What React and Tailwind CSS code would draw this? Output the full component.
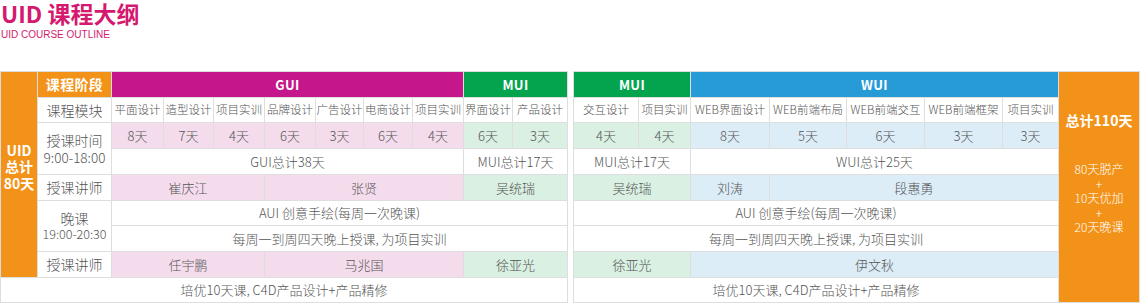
const FONT = { fontFamily: '"Noto Sans CJK SC", "Noto Sans", sans-serif' };

const GUI_MODULES = ['平面设计', '造型设计', '项目实训', '品牌设计', '广告设计', '电商设计', '项目实训'];
const GUI_DAYS = ['8天', '7天', '4天', '6天', '3天', '6天', '4天'];
const MUI_A_MODULES = ['界面设计', '产品设计'];
const MUI_A_DAYS = ['6天', '3天'];
const MUI_B_MODULES = ['交互设计', '项目实训'];
const MUI_B_DAYS = ['4天', '4天'];
const WUI_MODULES = ['WEB界面设计', 'WEB前端布局', 'WEB前端交互', 'WEB前端框架', '项目实训'];
const WUI_DAYS = ['8天', '5天', '6天', '3天', '3天'];

function Cell({ className = '', children }) {
  return (
    <div className={`flex items-center justify-center text-center font-light text-[#555] ${className}`}>
      {children}
    </div>
  );
}

function Head({ className = '', children }) {
  return (
    <div className={`flex items-center justify-center text-[13px] font-bold tracking-wide text-white ${className}`}>
      {children}
    </div>
  );
}

function LeftPanel() {
  return (
    <div className="grid grid-cols-[36px_73px_51px_49px_50px_50px_47px_48px_50px_48px_54px] grid-rows-[25px_24px_25px_25px_25px_24px_25px_25px_24px] gap-px border border-[#dedede] bg-[#dedede]">
      <div className="row-span-8 flex flex-col items-center justify-center bg-[#f39218] pb-[16px] text-[14px] font-bold leading-[16.5px] text-white">
        <span>UID</span>
        <span>总计</span>
        <span>80天</span>
      </div>
      <Head className="bg-[#f39218] text-[14px]">课程阶段</Head>
      <Head className="col-span-7 bg-[#c6168b]">GUI</Head>
      <Head className="col-span-2 bg-[#04a44f]">MUI</Head>

      <Cell className="bg-white text-[14px]">课程模块</Cell>
      {GUI_MODULES.concat(MUI_A_MODULES).map((m, i) => (
        <Cell key={i} className="bg-white text-[11.5px] whitespace-nowrap">{m}</Cell>
      ))}

      <Cell className="row-span-2 flex-col bg-white text-[14px] leading-[17px]">
        <span>授课时间</span>
        <span className="text-[13.5px]">9:00-18:00</span>
      </Cell>
      {GUI_DAYS.map((d, i) => (
        <Cell key={i} className="bg-[#f4dced] text-[13px]">{d}</Cell>
      ))}
      {MUI_A_DAYS.map((d, i) => (
        <Cell key={i} className="bg-[#d9f0e2] text-[13px]">{d}</Cell>
      ))}

      <Cell className="col-span-7 bg-white text-[13px]">GUI总计38天</Cell>
      <Cell className="col-span-2 bg-white text-[13px]">MUI总计17天</Cell>

      <Cell className="bg-white text-[14px]">授课讲师</Cell>
      <Cell className="col-span-3 bg-[#f4dced] text-[13px]">崔庆江</Cell>
      <Cell className="col-span-4 bg-[#f4dced] text-[13px]">张贤</Cell>
      <Cell className="col-span-2 bg-[#d9f0e2] text-[13px]">吴统瑞</Cell>

      <Cell className="row-span-2 flex-col bg-white text-[14px] leading-[15px]">
        <span>晚课</span>
        <span className="text-[12.5px]">19:00-20:30</span>
      </Cell>
      <Cell className="col-span-9 bg-white text-[13px]">AUI 创意手绘(每周一次晚课)</Cell>
      <Cell className="col-span-9 bg-white text-[13px]">每周一到周四天晚上授课, 为项目实训</Cell>

      <Cell className="bg-white text-[14px]">授课讲师</Cell>
      <Cell className="col-span-3 bg-[#f4dced] text-[13px]">任宇鹏</Cell>
      <Cell className="col-span-4 bg-[#f4dced] text-[13px]">马兆国</Cell>
      <Cell className="col-span-2 bg-[#d9f0e2] text-[13px]">徐亚光</Cell>

      <Cell className="col-span-11 bg-white text-[13px]">培优10天课, C4D产品设计+产品精修</Cell>
    </div>
  );
}

function RightPanel() {
  return (
    <div className="grid grid-cols-[64px_51px_78px_76px_77px_77px_55px_80px] grid-rows-[25px_24px_25px_25px_25px_24px_25px_25px_24px] gap-px border border-[#dedede] bg-[#dedede]">
      <Head className="col-span-2 bg-[#04a44f]">MUI</Head>
      <Head className="col-span-5 bg-[#279bd6]">WUI</Head>
      <div className="row-span-9 flex flex-col items-center bg-[#f39218] pt-[38px] text-white">
        <span className="text-[14px] font-bold leading-[20px]">总计110天</span>
        <div className="mt-[32px] flex flex-col items-center text-[12px] font-light leading-[14.5px]">
          <span>80天脱产</span>
          <span>+</span>
          <span>10天优加</span>
          <span>+</span>
          <span>20天晚课</span>
        </div>
      </div>

      {MUI_B_MODULES.concat(WUI_MODULES).map((m, i) => (
        <Cell key={i} className="bg-white text-[11.5px] whitespace-nowrap">{m}</Cell>
      ))}

      {MUI_B_DAYS.map((d, i) => (
        <Cell key={i} className="bg-[#d9f0e2] text-[13px]">{d}</Cell>
      ))}
      {WUI_DAYS.map((d, i) => (
        <Cell key={i} className="bg-[#dcedf8] text-[13px]">{d}</Cell>
      ))}

      <Cell className="col-span-2 bg-white text-[13px]">MUI总计17天</Cell>
      <Cell className="col-span-5 bg-white text-[13px]">WUI总计25天</Cell>

      <Cell className="col-span-2 bg-[#d9f0e2] text-[13px]">吴统瑞</Cell>
      <Cell className="bg-[#dcedf8] text-[13px]">刘涛</Cell>
      <Cell className="col-span-4 bg-[#dcedf8] text-[13px]">段惠勇</Cell>

      <Cell className="col-span-7 bg-white text-[13px]">AUI 创意手绘(每周一次晚课)</Cell>
      <Cell className="col-span-7 bg-white text-[13px]">每周一到周四天晚上授课, 为项目实训</Cell>

      <Cell className="col-span-2 bg-[#d9f0e2] text-[13px]">徐亚光</Cell>
      <Cell className="col-span-5 bg-[#dcedf8] text-[13px]">伊文秋</Cell>

      <Cell className="col-span-7 bg-white text-[13px]">培优10天课, C4D产品设计+产品精修</Cell>
    </div>
  );
}

export default function App() {
  return (
    <div className="h-[307px] w-[1142px] overflow-hidden bg-white" style={FONT}>
      <div className="h-[71px] pl-px">
        <div className="text-[23px] font-bold leading-[26px] text-[#d4196f]">UID 课程大纲</div>
        <div
          className="mt-[3px] text-[10px] leading-[12px] text-[#d4196f]"
          style={{ fontFamily: '"Liberation Sans", Arial, sans-serif' }}
        >
          UID COURSE OUTLINE
        </div>
      </div>
      <div className="flex items-start">
        <LeftPanel />
        <div className="ml-[5px]">
          <RightPanel />
        </div>
      </div>
    </div>
  );
}
